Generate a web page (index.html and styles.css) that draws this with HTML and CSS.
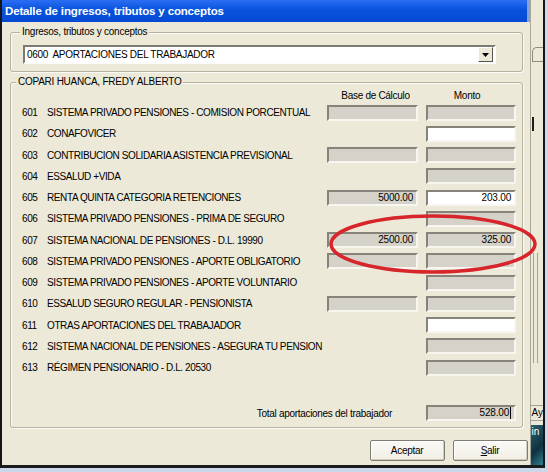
FILE: index.html
```html
<!DOCTYPE html>
<html lang="es">
<head>
  <meta charset="UTF-8">
  <title>Detalle de ingresos, tributos y conceptos</title>
  <link rel="stylesheet" href="styles.css">
</head>
<body>

  <div class="screen">
    <div class="frame">

      <!-- Dialog window -->
      <div class="dialog">
        <div class="titlebar">Detalle de ingresos, tributos y conceptos</div>

        <div class="client">
          <div class="group group-top">
            <div class="group-title">Ingresos, tributos y conceptos</div>
            <div class="combo">
              <span>0600&nbsp; APORTACIONES DEL TRABAJADOR</span>
              <span class="combo-btn">
                <svg width="7" height="4" viewBox="0 0 7 4"><path d="M0,0 L7,0 L3.5,4 Z" fill="#000"></path></svg>
              </span>
            </div>
          </div>

          <div class="group group-main">
            <div class="group-title">COPARI HUANCA, FREDY ALBERTO</div>
            <div class="grid">
              <div class="cols-head">
                <span class="head-base">Base de Cálculo</span>
                <span class="head-monto">Monto</span>
              </div>

              <div class="row"><span class="num">601</span><span class="label">SISTEMA PRIVADO PENSIONES - COMISION PORCENTUAL</span><span class="box base"></span><span class="box"></span></div>
              <div class="row"><span class="num">602</span><span class="label">CONAFOVICER</span><span class="box base blank"></span><span class="box white"></span></div>
              <div class="row"><span class="num">603</span><span class="label">CONTRIBUCION SOLIDARIA ASISTENCIA PREVISIONAL</span><span class="box base"></span><span class="box"></span></div>
              <div class="row"><span class="num">604</span><span class="label">ESSALUD +VIDA</span><span class="box base blank"></span><span class="box"></span></div>
              <div class="row"><span class="num">605</span><span class="label">RENTA QUINTA CATEGORIA RETENCIONES</span><span class="box base">5000.00</span><span class="box white">203.00</span></div>
              <div class="row"><span class="num">606</span><span class="label">SISTEMA PRIVADO PENSIONES - PRIMA DE SEGURO</span><span class="box base blank"></span><span class="box"></span></div>
              <div class="row"><span class="num">607</span><span class="label">SISTEMA NACIONAL DE PENSIONES - D.L. 19990</span><span class="box base">2500.00</span><span class="box">325.00</span></div>
              <div class="row"><span class="num">608</span><span class="label">SISTEMA PRIVADO PENSIONES - APORTE OBLIGATORIO</span><span class="box base"></span><span class="box"></span></div>
              <div class="row"><span class="num">609</span><span class="label">SISTEMA PRIVADO PENSIONES - APORTE VOLUNTARIO</span><span class="box base blank"></span><span class="box"></span></div>
              <div class="row"><span class="num">610</span><span class="label">ESSALUD SEGURO REGULAR - PENSIONISTA</span><span class="box base"></span><span class="box"></span></div>
              <div class="row"><span class="num">611</span><span class="label">OTRAS APORTACIONES DEL TRABAJADOR</span><span class="box base blank"></span><span class="box white"></span></div>
              <div class="row"><span class="num">612</span><span class="label">SISTEMA NACIONAL DE PENSIONES - ASEGURA TU PENSION</span><span class="box base blank"></span><span class="box"></span></div>
              <div class="row"><span class="num">613</span><span class="label">RÉGIMEN PENSIONARIO - D.L. 20530</span><span class="box base blank"></span><span class="box"></span></div>
            </div>

            <div class="total">
              <span class="total-label">Total aportaciones del trabajador</span>
              <span class="box">528.00<i class="caret"></i></span>
            </div>
          </div>

          <div class="buttons">
            <button class="btn">Aceptar</button>
            <button class="btn"><u>S</u>alir</button>
          </div>
        </div>
      </div>

      <!-- Window behind the dialog -->
      <div class="backdrop">
        <div class="bd-tab"></div>
        <div class="bd-mark"></div>
        <div class="bd-scroll"></div>
        <div class="bd-text">Ay</div>
        <div class="bd-image">in</div>
      </div>

    </div>

    <!-- Hand drawn highlight -->
    <svg class="highlight" width="548" height="472" viewBox="0 0 548 472">
      <ellipse cx="433" cy="244" rx="102" ry="28" fill="none" stroke="#d7262b" stroke-width="3.5"></ellipse>
    </svg>
  </div>

</body>
</html>
```

FILE: styles.css
```css
body {
  margin: 0;
  font-family: 'Liberation Sans', Arial, sans-serif;
  font-size: 10px;
  color: #000;
}

.screen {
  position: relative;
  width: 548px;
  height: 472px;
  background: #cbd8ea;
  overflow: hidden;
}

.frame {
  display: flex;
  width: 545px;
  height: 468px;
  box-sizing: border-box;
  border-left: 2px solid #151515;
  border-right: 2px solid #151515;
  border-bottom: 3px solid #1c1c1c;
}

.dialog {
  width: 530px;
  display: flex;
  flex-direction: column;
  background: #ece9d8;
}

.titlebar {
  height: 22px;
  line-height: 22px;
  padding-left: 3px;
  background: linear-gradient(#2b6ef2, #0853de 45%, #0549d2);
  border-right: 3px solid #86a2dc;
  color: #fff;
  font-size: 11.5px;
  font-weight: bold;
  letter-spacing: -0.15px;
  white-space: nowrap;
}

.client {
  flex: 1;
  padding: 10px 0 0 8px;
}

.group {
  width: 513px;
  box-sizing: border-box;
  border: 1px solid #b4b2a3;
  border-radius: 3px;
  box-shadow: inset 1px 1px 0 #fbfaf5, 1px 1px 0 #fbfaf5;
}

.group-title {
  width: max-content;
  margin: -7px 0 0 9px;
  padding: 0 2px;
  line-height: 12px;
  background: #ece9d8;
  letter-spacing: -0.25px;
}

.group-top {
  height: 40px;
}

.combo {
  display: flex;
  align-items: center;
  justify-content: space-between;
  width: 473px;
  height: 19px;
  margin: 7px 0 0 12px;
  padding: 0 1px 0 2px;
  box-sizing: border-box;
  border: 2px solid;
  border-color: #7d7b6f #fdfdfb #fdfdfb #7d7b6f;
  background: #fff;
  letter-spacing: -0.3px;
}

.combo-btn {
  display: flex;
  align-items: center;
  justify-content: center;
  width: 13px;
  height: 13px;
  border: 1px solid;
  border-color: #fff #55534a #55534a #fff;
  background: #ece9d8;
}

.group-main {
  display: flex;
  flex-direction: column;
  height: 346px;
  margin-top: 10px;
}

.group-main .group-title {
  margin-left: 5px;
}

.grid {
  padding: 0 6px 0 11px;
}

.cols-head {
  display: flex;
  justify-content: flex-end;
  align-items: center;
  height: 14px;
  letter-spacing: -0.3px;
}

.head-base {
  width: 91px;
  margin-right: 8px;
  padding-left: 6px;
  box-sizing: border-box;
  text-align: center;
}

.head-monto {
  width: 90px;
  padding-right: 8px;
  box-sizing: border-box;
  text-align: center;
}

.row {
  display: flex;
  align-items: center;
  height: 21.25px;
  letter-spacing: -0.4px;
}

.num {
  width: 25px;
}

.label {
  flex: 1;
  white-space: nowrap;
}

.box {
  width: 90px;
  height: 16px;
  box-sizing: border-box;
  padding-right: 3px;
  border: 2px solid;
  border-color: #85837a #f7f6f0 #f7f6f0 #85837a;
  background: #d5d2c9;
  line-height: 12px;
  text-align: right;
  letter-spacing: -0.2px;
}

.box.base {
  width: 91px;
  margin-right: 8px;
}

.box.blank {
  visibility: hidden;
}

.box.white {
  background: #fff;
}

.total {
  display: flex;
  justify-content: flex-end;
  align-items: center;
  margin-top: auto;
  padding: 0 6px 6px 0;
}

.total-label {
  margin-right: 34px;
  letter-spacing: -0.3px;
}

.caret {
  display: inline-block;
  width: 1px;
  height: 12px;
  margin-left: 1px;
  vertical-align: top;
  background: #000;
}

.buttons {
  display: flex;
  justify-content: flex-end;
  gap: 8px;
  margin: 12px 2px 0 0;
}

.btn {
  width: 75px;
  height: 21px;
  padding: 0;
  border: 1px solid #7f7d72;
  border-radius: 2px;
  background: linear-gradient(#fbfaf6, #f0eee4);
  box-shadow: inset -1px -1px 0 #cfcdc0, inset 1px 1px 0 #fff;
  font-family: inherit;
  font-size: 10px;
  letter-spacing: -0.3px;
}

.backdrop {
  flex: 1;
  display: flex;
  flex-direction: column;
  background: #ece9d8;
  border-left: 1px solid #a9a799;
}

.bd-tab {
  height: 13px;
  margin: 47px 0 0 1px;
  border: 1px solid #8d8b80;
  border-right: none;
  border-radius: 5px 0 0 0;
}

.bd-mark {
  width: 2px;
  height: 14px;
  margin: 55px 0 0 1px;
  background: #1e1e1e;
}

.bd-scroll {
  width: 3px;
  height: 110px;
  margin: 122px 0 0 2px;
  border-left: 1px solid #a3a196;
  border-right: 1px solid #a3a196;
}

.bd-text {
  margin-top: 42px;
  padding-left: 1px;
  line-height: 14px;
  border-top: 1px solid #a3a196;
  border-bottom: 1px solid #a3a196;
}

.bd-image {
  flex: 1;
  margin-top: 4px;
  padding-left: 1px;
  background: linear-gradient(135deg, #2a5d6a, #0f3340 60%, #2f8190);
  color: #fff;
  line-height: 14px;
}

.highlight {
  position: absolute;
  left: 0;
  top: 0;
  pointer-events: none;
}
```
